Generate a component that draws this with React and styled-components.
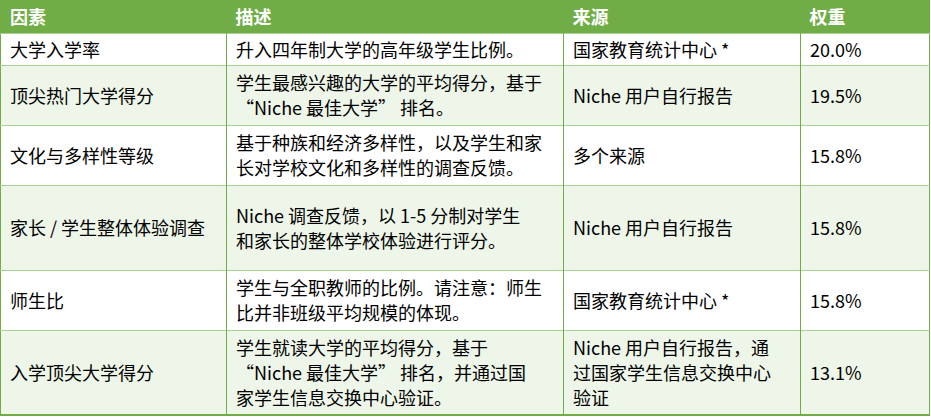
import React from "react"
import styled, { createGlobalStyle } from "styled-components"

const GlobalStyle = createGlobalStyle`
  body {
    margin: 0;
    background: #ffffff;
    font-family: "Noto Sans CJK SC", "Noto Sans", sans-serif;
  }
`

const Table = styled.table`
  width: 930px;
  border-collapse: collapse;
  table-layout: fixed;
  font-size: 18px;
  line-height: 25px;
  color: #000;
  border-left: 1px solid #70ad47;
  border-right: 1px solid #70ad47;
  border-bottom: 2px solid #70ad47;
`

const HeadRow = styled.tr`
  background: #70ad47;
  height: 33px;
`

const HeadCell = styled.th`
  text-align: left;
  padding: 0 9px;
  color: #ffffff;
  font-weight: 700;
  vertical-align: middle;
`

const Row = styled.tr`
  background: ${(p) => (p.$alt ? "#eef6e9" : "#ffffff")};
  height: ${(p) => p.$h}px;
  border-top: 1px solid #a9d08e;
`

const Cell = styled.td`
  padding: 0 9px;
  vertical-align: middle;
  border-left: 1px solid #70ad47;
  &:first-child {
    border-left: none;
  }
`

const rows = [
  {
    h: 32,
    factor: "大学入学率",
    desc: ["升入四年制大学的高年级学生比例。"],
    source: ["国家教育统计中心 *"],
    weight: "20.0%",
  },
  {
    h: 60,
    factor: "顶尖热门大学得分",
    desc: ["学生最感兴趣的大学的平均得分，基于", "“Niche 最佳大学” 排名。"],
    source: ["Niche 用户自行报告"],
    weight: "19.5%",
  },
  {
    h: 60,
    factor: "文化与多样性等级",
    desc: ["基于种族和经济多样性，以及学生和家", "长对学校文化和多样性的调查反馈。"],
    source: ["多个来源"],
    weight: "15.8%",
  },
  {
    h: 85,
    factor: "家长 / 学生整体体验调查",
    desc: ["Niche 调查反馈，以 1-5 分制对学生", "和家长的整体学校体验进行评分。"],
    source: ["Niche 用户自行报告"],
    weight: "15.8%",
  },
  {
    h: 60,
    factor: "师生比",
    desc: ["学生与全职教师的比例。请注意：师生", "比并非班级平均规模的体现。"],
    source: ["国家教育统计中心 *"],
    weight: "15.8%",
  },
  {
    h: 85,
    factor: "入学顶尖大学得分",
    desc: ["学生就读大学的平均得分，基于", "“Niche 最佳大学” 排名，并通过国", "家学生信息交换中心验证。"],
    source: ["Niche 用户自行报告，通", "过国家学生信息交换中心", "验证"],
    weight: "13.1%",
  },
]

const Lines = ({ lines }) =>
  lines.map((l, i) => (
    <React.Fragment key={i}>
      {i > 0 && <br />}
      {l}
    </React.Fragment>
  ))

export default function App() {
  return (
    <>
      <GlobalStyle />
      <Table>
        <colgroup>
          <col style={{ width: 226 }} />
          <col style={{ width: 337 }} />
          <col style={{ width: 237 }} />
          <col />
        </colgroup>
        <thead>
          <HeadRow>
            <HeadCell>因素</HeadCell>
            <HeadCell>描述</HeadCell>
            <HeadCell>来源</HeadCell>
            <HeadCell>权重</HeadCell>
          </HeadRow>
        </thead>
        <tbody>
          {rows.map((r, i) => (
            <Row key={r.factor} $h={r.h} $alt={i % 2 === 1}>
              <Cell>{r.factor}</Cell>
              <Cell>
                <Lines lines={r.desc} />
              </Cell>
              <Cell>
                <Lines lines={r.source} />
              </Cell>
              <Cell>{r.weight}</Cell>
            </Row>
          ))}
        </tbody>
      </Table>
    </>
  )
}
